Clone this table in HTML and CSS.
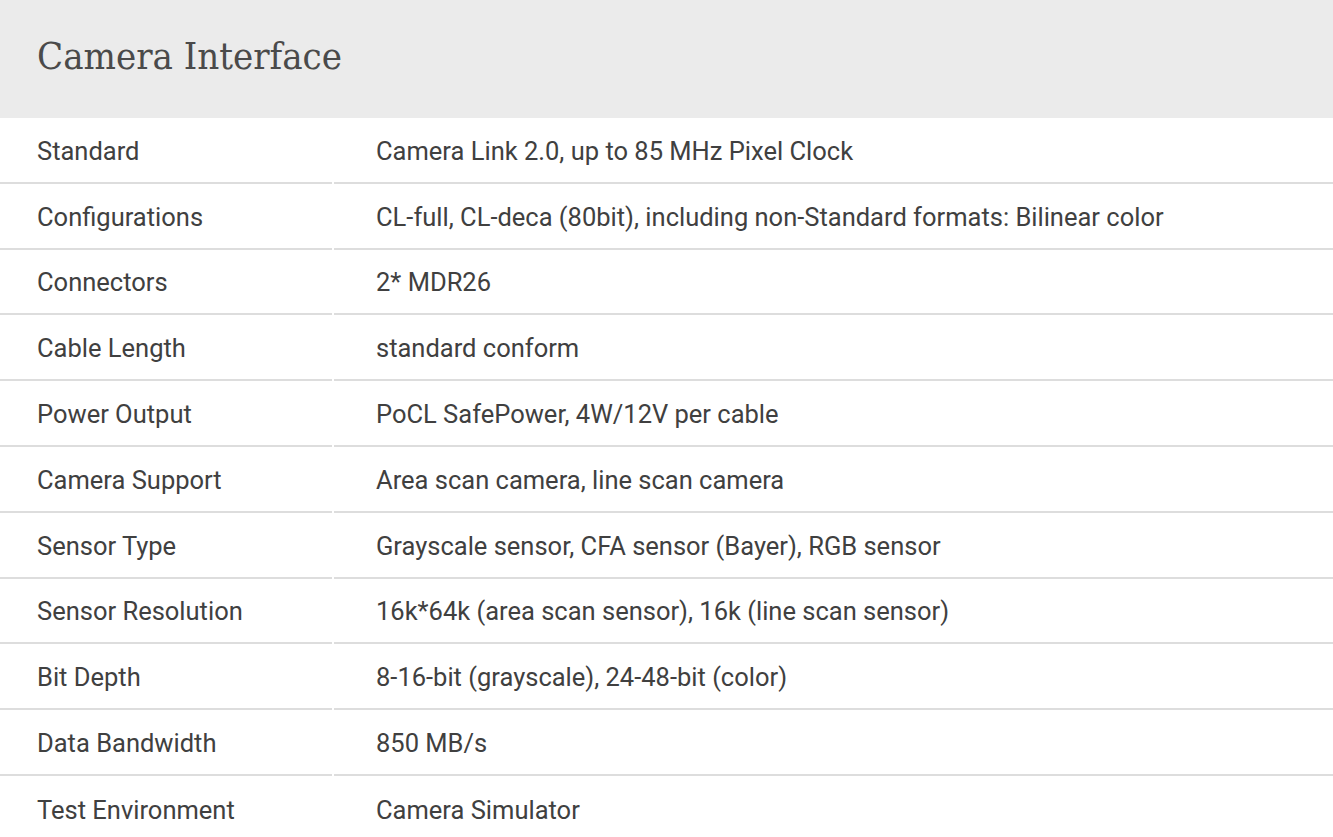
FILE: index.html
```html
<!DOCTYPE html>
<html lang="en">
<head>
<meta charset="utf-8">
<title>Camera Interface</title>
<link rel="stylesheet" href="styles.css">
</head>
<body>
<section class="spec">
  <header class="spec-head">
    <h2 class="spec-title">Camera Interface</h2>
  </header>
  <table class="spec-table">
    <tbody>
      <tr><td class="key">Standard</td><td class="val">Camera Link 2.0, up to 85 MHz Pixel Clock</td></tr>
      <tr><td class="key">Configurations</td><td class="val">CL-full, CL-deca (80bit), including non-Standard formats: Bilinear color</td></tr>
      <tr><td class="key">Connectors</td><td class="val">2* MDR26</td></tr>
      <tr><td class="key">Cable Length</td><td class="val">standard conform</td></tr>
      <tr><td class="key">Power Output</td><td class="val">PoCL SafePower, 4W/12V per cable</td></tr>
      <tr><td class="key">Camera Support</td><td class="val">Area scan camera, line scan camera</td></tr>
      <tr><td class="key">Sensor Type</td><td class="val">Grayscale sensor, CFA sensor (Bayer), RGB sensor</td></tr>
      <tr><td class="key">Sensor Resolution</td><td class="val">16k*64k (area scan sensor), 16k (line scan sensor)</td></tr>
      <tr><td class="key">Bit Depth</td><td class="val">8-16-bit (grayscale), 24-48-bit (color)</td></tr>
      <tr><td class="key">Data Bandwidth</td><td class="val">850 MB/s</td></tr>
      <tr><td class="key">Test Environment</td><td class="val">Camera Simulator</td></tr>
    </tbody>
  </table>
</section>
</body>
</html>
```
FILE: styles.css
```css
html, body {
  margin: 0;
  padding: 0;
  background: #ffffff;
}
body {
  font-family: Roboto, "Liberation Sans", sans-serif;
  color: #404040;
}
.spec-head {
  background: #ebebeb;
  height: 118px;
  display: flex;
  align-items: center;
  padding: 0 37px;
  box-sizing: border-box;
}
.spec-title {
  margin: 0;
  font-family: "DejaVu Serif", serif;
  font-stretch: condensed;
  font-weight: normal;
  font-size: 38px;
  color: #4a4a4a;
  padding-bottom: 6px;
}
.spec-table {
  border-collapse: separate;
  border-spacing: 2px 0;
  margin: 0 -2px;
  width: calc(100% + 4px);
  table-layout: fixed;
}
.spec-table td {
  height: 65.8px;
  padding: 2px 0 0 0;
  border-bottom: 2px solid #dddddd;
  font-size: 25.5px;
  vertical-align: middle;
  box-sizing: border-box;
}
.spec-table tr:last-child td {
  border-bottom: none;
}
.spec-table .key {
  width: 332px;
  padding-left: 37px;
}
.spec-table .val {
  padding-left: 42px;
}
```
